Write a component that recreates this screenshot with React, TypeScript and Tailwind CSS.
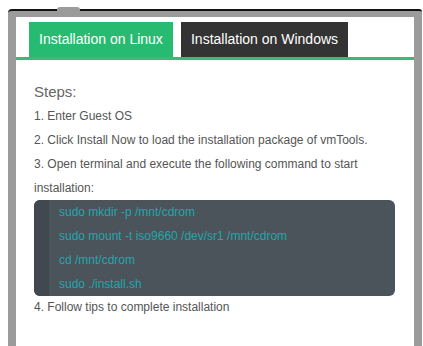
import { useState } from "react";

const commands = [
  "sudo mkdir -p /mnt/cdrom",
  "sudo mount -t iso9660 /dev/sr1 /mnt/cdrom",
  "cd /mnt/cdrom",
  "sudo ./install.sh",
];

const App = () => {
  const [tab, setTab] = useState("linux");

  return (
    <div className="h-[346px] w-[423px] overflow-hidden bg-white pt-[9px] pl-[8px] font-['Liberation_Sans',Arial,sans-serif]">
      <div className="relative h-[340px] w-[414px] rounded-tl-[4px] rounded-tr-[3px] border-t-2 border-[#111] bg-[#9b9b9b] px-[8px] pt-[6px]">
        {/* little bump on the frame */}
        <div className="absolute left-[49px] top-[-4px] h-[4px] w-[23px] rounded-t-[3px] bg-[#9b9b9b]" />

        <div className="h-full bg-white">
          <div className="flex gap-[8px] pl-[13px] pt-[5px]">
            <button
              onClick={() => setTab("linux")}
              className="h-[35px] w-[144px] bg-[#27bb72] text-[14px] text-white"
            >
              Installation on Linux
            </button>
            <button
              onClick={() => setTab("windows")}
              className="h-[35px] w-[167px] bg-[#333333] text-[14px] text-white"
            >
              Installation on Windows
            </button>
          </div>
          <div className="h-[3px] bg-[#3cb878]" />

          {tab === "linux" && (
            <div className="pl-[18px] pr-[19px] pt-[21px] text-[12px] leading-[24px] text-[#555]">
              <p className="mb-[1px] text-[15px] leading-[22px] text-[#666]">Steps:</p>
              <p>1. Enter Guest OS</p>
              <p>2. Click Install Now to load the installation package of vmTools.</p>
              <p>3. Open terminal and execute the following command to start</p>
              <p>installation:</p>
              <div className="flex overflow-hidden rounded-[6px] bg-[#4b535b]">
                <div className="w-[15px] bg-[#41484f]" />
                <div className="pl-[10px] text-[12px] leading-[24px] text-[#22a8a8]">
                  {commands.map((c) => (
                    <div key={c}>{c}</div>
                  ))}
                </div>
              </div>
              <p className="leading-[22px]">4. Follow tips to complete installation</p>
            </div>
          )}
        </div>
      </div>
    </div>
  );
};

export default App;
